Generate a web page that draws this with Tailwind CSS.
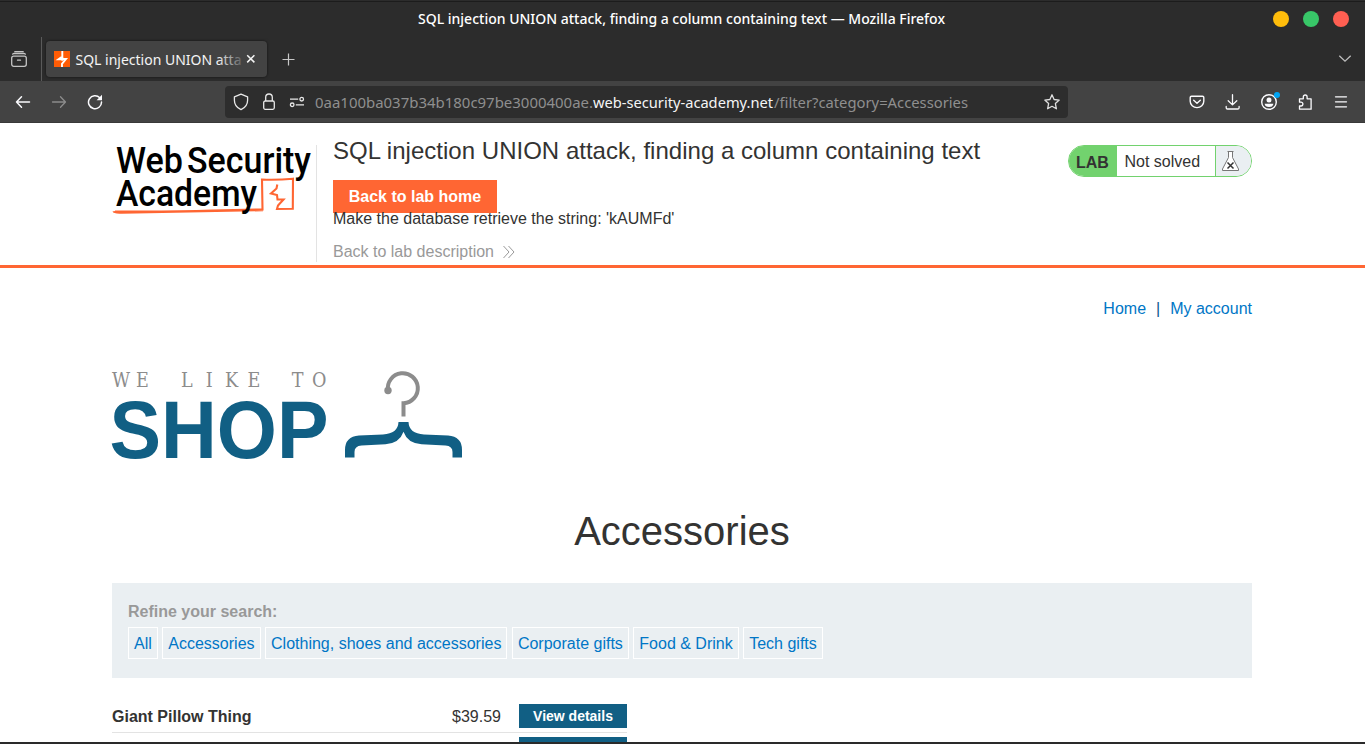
<!DOCTYPE html>
<html lang="en">
<head>
<meta charset="utf-8">
<title>SQL injection UNION attack, finding a column containing text</title>
<script src="https://cdn.jsdelivr.net/npm/@tailwindcss/browser@4"></script>
</head>
<body class="h-[744px] w-[1365px] overflow-hidden bg-[#2c2c2c] font-['Liberation_Sans',Arial,sans-serif] text-base text-[#333332]">
<div class="flex h-[744px] flex-col">
  <!-- window title -->
  <div class="relative flex h-[37px] shrink-0 items-center justify-end gap-3.5 border-t border-[#2c2c2c] pr-4 shadow-[inset_0_1px_0_#1c1c1c]">
    <svg class="absolute left-0 top-0" width="1365" height="36" font-family="Noto Sans, sans-serif"><text x="418" y="23" font-size="14" font-weight="500" fill="#fff" textLength="527" lengthAdjust="spacingAndGlyphs">SQL injection UNION attack, finding a column containing text — Mozilla Firefox</text></svg>
    <span class="size-4 rounded-full bg-[#ffbd0b]"></span>
    <span class="size-4 rounded-full bg-[#38c768]"></span>
    <span class="size-4 rounded-full bg-[#ff5f52]"></span>
  </div>
  <!-- tab strip -->
  <div class="flex h-[44px] shrink-0">
    <div class="flex w-[42px] justify-center border-r border-[#5a5a5a] pr-1 pt-[14px]">
      <svg width="16" height="16" fill="none" stroke="#c4c4c4" stroke-width="1.300" stroke-linecap="round"><rect x=".7" y="5.200" width="14.600" height="10.100" rx="2"/><path d="M1.600 3.100Q2.200 2.500 3.200 2.500H12.800Q13.800 2.500 14.400 3.100M3.800 .7H12.200M6.500 9.200H9.500"/></svg>
    </div>
    <div class="ml-1 mt-1 flex h-9 w-[221px] items-center rounded bg-[#434343] pl-2 shadow-[0_0_3px_rgba(0,0,0,.6)]">
      <svg width="16" height="16"><rect width="16" height="16" fill="#ff5c05"/><path d="M8.300 0V5.500L4.500 8.200H8.300V9.800M8.500 6.200V8H12L8 12.800V16" fill="none" stroke="#fff" stroke-width="1.900"/></svg>
      <svg class="ml-[5px] overflow-visible" width="168" height="36" font-family="Noto Sans, sans-serif">
        <defs><linearGradient id="f" gradientUnits="userSpaceOnUse" x1="142" y1="0" x2="172" y2="0"><stop stop-color="#f5f5f5"/><stop offset="1" stop-color="#f5f5f5" stop-opacity="0"/></linearGradient></defs>
        <text x="0.500" y="24" font-size="14.200" fill="url(#f)" textLength="166" lengthAdjust="spacingAndGlyphs">SQL injection UNION atta</text></svg>
      <svg class="ml-[3px]" width="10" height="10" stroke="#f5f5f5" stroke-width="1.500"><path d="M1.200 1.200l7.200 7.200M8.400 1.200l-7.200 7.200"/></svg>
    </div>
    <svg class="ml-[15px] mt-4" width="13" height="13" stroke="#c8c8c8" stroke-width="1.200"><path d="M6.500.5v12M.5 6.500h12"/></svg>
    <svg class="ml-auto mr-[13px] mt-[17px]" width="14" height="9" fill="none" stroke="#bdbdbd" stroke-width="1.300"><path d="M1.300 1.700L7 7.200l5.700-5.500"/></svg>
  </div>
  <!-- navigation bar -->
  <div class="flex h-[42px] shrink-0 items-center border-b border-[#393939] bg-[#434343]">
    <svg class="ml-[15px]" width="16" height="16" fill="none" stroke="#fbfbfe" stroke-width="1.500" stroke-linecap="round" stroke-linejoin="round"><path d="M6.500 2.800L1.500 8l5 5.200M1.500 8h13"/></svg>
    <svg class="ml-5" width="16" height="16" fill="none" stroke="#8c8c8c" stroke-width="1.300" stroke-linecap="round" stroke-linejoin="round"><path d="M9.500 2.800l5 5.200-5 5.200M14.500 8h-13"/></svg>
    <svg class="ml-5" width="16" height="16" fill="none" stroke="#fbfbfe" stroke-width="1.500" stroke-linecap="round"><path d="M12.800 3.800A6.500 6.500 0 1 0 14.500 8"/><path d="M15 .800v5.400H9.600z" fill="#fbfbfe" stroke="none"/></svg>
    <div class="ml-[122px] flex h-8 w-[843px] items-center rounded bg-[#2d2d2d] pl-2">
      <svg width="16" height="18" fill="none" stroke="#e8e8e8" stroke-width="1.300" stroke-linejoin="round"><path d="M8 1.200l6.600 2.600v3.400c0 4-2.600 7.600-6.600 9.500-4-1.900-6.600-5.500-6.600-9.500V3.800z"/></svg>
      <svg class="ml-3.5" width="12" height="18" fill="none" stroke="#e8e8e8" stroke-width="1.300"><rect x=".7" y="8" width="10.600" height="8.300" rx="1.500"/><path d="M2.700 8V4.300a3.300 3.300 0 0 1 6.600 0V8"/></svg>
      <svg class="ml-3.5" width="16" height="12" fill="none" stroke="#e8e8e8" stroke-width="1.300"><circle cx="12.700" cy="3.200" r="1.800"/><circle cx="3.200" cy="8.800" r="1.800"/><path d="M1 3.200h8.200M6.800 8.800H15"/></svg>
      <svg class="ml-2.5" width="656" height="32" font-family="Noto Sans, sans-serif" font-size="14.800" font-weight="400">
        <text x="0" y="22" fill="#8f8f8f" textLength="278" lengthAdjust="spacingAndGlyphs">0aa100ba037b34b180c97be3000400ae.</text>
        <text x="278" y="22" fill="#f5f5f5" textLength="180" lengthAdjust="spacingAndGlyphs">web-security-academy.net</text>
        <text x="459" y="22" fill="#8f8f8f" textLength="194" lengthAdjust="spacingAndGlyphs">/filter?category=Accessories</text>
      </svg>
      <svg class="ml-auto mr-2" width="16" height="16" fill="none" stroke="#e0e0e0" stroke-width="1.300" stroke-linejoin="round"><path d="M8 .8l2.100 4.700 5.100.6-3.800 3.500 1 5.200L8 12.300l-4.400 2.500 1-5.200L.8 6.100l5.100-.6z"/></svg>
    </div>
    <svg class="ml-[121px]" width="16" height="16" fill="none" stroke="#fbfbfe" stroke-width="1.400" stroke-linecap="round" stroke-linejoin="round"><path d="M2.500 2.200h11q1.300 0 1.300 1.300v3.700a6.800 6.400 0 0 1-13.600 0V3.500q0-1.300 1.300-1.300zM4.700 6.300L8 9.300l3.300-3"/></svg>
    <svg class="ml-5" width="16" height="16" fill="none" stroke="#fbfbfe" stroke-width="1.300" stroke-linecap="round" stroke-linejoin="round"><path d="M7.500.7v10M3.200 6.700l4.300 4.200 4.300-4.200M1.200 12.500v1.200q0 1.300 1.300 1.300h10.300q1.300 0 1.300-1.300v-1.200"/></svg>
    <svg class="ml-5 overflow-visible" width="16" height="16"><circle cx="8" cy="8" r="7.300" fill="none" stroke="#fbfbfe" stroke-width="1.400"/><circle cx="8" cy="6.100" r="2.500" fill="#fbfbfe"/><path d="M3.600 9.800h8.800q-.5 3.300-4.400 3.300t-4.400-3.300z" fill="#fbfbfe"/><circle cx="16" cy="1" r="3" fill="#00a5f5"/></svg>
    <svg class="ml-[21px]" width="16" height="16" fill="none" stroke="#fbfbfe" stroke-width="1.300" stroke-linejoin="round"><path d="M1.500 15.200V12H3a1.700 1.700 0 0 0 0-3.800H1.500V4.800h3.800V2.900a1.900 1.900 0 0 1 3.800 0v1.900h4v10.400z"/></svg>
    <svg class="ml-5" width="14" height="16" stroke="#fbfbfe" stroke-width="1.300" stroke-linecap="round"><path d="M1.500 2.800h11M1.500 7.800h11M1.500 12.800h11"/></svg>
  </div>
  <!-- page -->
  <main class="h-[619px] shrink-0 overflow-hidden bg-white">
    <header class="h-[145px] border-b-3 border-[#ff6633]">
      <div class="ml-28 flex w-[1140px] items-start">
        <svg class="mt-[17px] overflow-visible" width="204" height="80" font-family="Roboto, sans-serif" font-weight="500" font-size="37">
          <path d="M1.500 71.300Q2 73 10 72.600L151 70.200M3 71.500Q60 72 100 70.500L150.500 69.500 150 39.600Q166 40.200 181 38.700L180.800 68.800 165 69 166 65.500 171.500 59.500 165.500 59.500 165 55 159 53.500 164.500 48.500 165.300 44.500" fill="none" stroke="#ff6633" stroke-width="2.100"/>
          <text x="4" y="33" textLength="67" lengthAdjust="spacingAndGlyphs">Web</text>
          <text x="75" y="33" textLength="124" lengthAdjust="spacingAndGlyphs">Security</text>
          <text x="4" y="66" textLength="141" lengthAdjust="spacingAndGlyphs">Academy</text>
        </svg>
        <div class="mt-[22px] h-[117px] border-l border-[#e3e3e3]"></div>
        <div class="ml-4 pt-3">
          <h2 class="text-2xl leading-8 tracking-[.018px]">SQL injection UNION attack, finding a column containing text</h2>
          <a class="mt-[13px] block h-[33px] w-[164px] bg-[#ff6633] text-center font-bold leading-[33px] text-white">Back to lab home</a>
          <p class="relative -mt-1.5 leading-6">Make the database retrieve the string: 'kAUMFd'</p>
          <a class="mt-[9px] flex items-center leading-6 text-[#999]">Back to lab description
            <svg class="ml-2 -mt-px" width="14" height="14" fill="none" stroke="#999" stroke-width="1"><path d="M1.500 1L7 7l-5.500 6M6.500 1L12 7l-5.500 6"/></svg></a>
        </div>
        <div class="ml-auto mt-[22px] flex h-8 w-[184px] overflow-hidden rounded-2xl border border-[#72d26e] bg-white">
          <b class="w-12 bg-[#72d26e] pl-[7px] leading-[33px]">LAB</b>
          <span class="flex-1 pl-[7.500px] leading-8">Not solved</span>
          <span class="w-9 border-l border-[#72d26e] bg-[#eaeff2] pl-1.5 pt-[5px]">
            <svg width="17" height="21" fill="none" stroke="#777" stroke-width="1"><path d="M5.500.5h6M6.500.5v6L.5 18v1.500h16V18l-6-11.500v-6z" fill="#fff"/><path d="M5.500 11.500l6 6M11.500 11.500l-6 6" stroke="#333" stroke-width="1.500"/></svg>
          </span>
        </div>
      </div>
    </header>
    <div class="ml-28 w-[1140px]">
      <nav class="flex justify-end gap-2.5 pt-[29px] leading-6 text-[#0076c6]"><a>Home</a><span class="text-[#0b5a8c]">|</span><a>My account</a></nav>
      <svg class="mt-[46px] overflow-visible" width="360" height="99">
        <text transform="scale(.86 1)" y="20" x="10.500 35.500 87 113 139 165 216 241" text-anchor="middle" font-family="DejaVu Serif, serif" font-size="20.500" fill="#8c8c8c">WELIKETO</text>
        <text x="-2.500" y="90.500" font-family="Liberation Sans, Arial, sans-serif" font-weight="700" font-size="81" fill="#115f84" textLength="219" lengthAdjust="spacingAndGlyphs">SHOP</text>
        <g fill="none"><path d="M276 23.500A15 15 0 1 1 291.500 36.200V49.500" stroke="#8c8c8c" stroke-width="4"/><circle cx="276" cy="23.500" r="3.700" fill="#8c8c8c"/></g>
        <path transform="translate(0 -1)" d="M233 91.500V84q0-13.500 14-14.500l24-1q15-1 15.500-12.500h10q.500 11.500 15.500 12.500l24 1q14 1 14 14.500v7.500h-9.500V86q0-6-7-6.500l-24-1.200q-14-1-18-12.500-4 11.500-18 12.500l-24 1.200q-7 .5-7 6.500v5.500z" fill="#115f84"/>
      </svg>
      <h1 class="mt-[41px] text-center text-[40px] leading-[48px]">Accessories</h1>
      <section class="mt-7 h-[95px] bg-[#eaeff2] px-4 pt-[17px]">
        <b class="block h-[27px] leading-6 text-[#999]">Refine your search:</b>
        <div class="flex gap-[4.500px] leading-8 text-[#0076c6]">
          <a class="h-8 border border-white px-[5px]">All</a><a class="h-8 border border-white px-[5px]">Accessories</a><a class="h-8 border border-white px-[5px]">Clothing, shoes and accessories</a><a class="h-8 border border-white px-[5px]">Corporate gifts</a><a class="h-8 border border-white px-[5px]">Food &amp; Drink</a><a class="h-8 border border-white px-[5px]">Tech gifts</a>
        </div>
      </section>
      <div class="mt-[21px] w-[515px]">
        <div class="flex h-[34px] items-center border-b border-[#e3e3e3]">
          <b class="pt-0.5">Giant Pillow Thing</b><span class="ml-auto mr-[18px] pt-0.5">$39.59</span><a class="h-6 w-[108px] bg-[#115f84] text-center text-sm font-bold leading-6 text-white">View details</a>
        </div>
        <div class="flex justify-end pt-1"><a class="h-6 w-[108px] bg-[#115f84]"></a></div>
      </div>
    </div>
  </main>
  <div class="h-0.5 shrink-0 bg-[#2a2a2a]"></div>
</div>
</body>
</html>
